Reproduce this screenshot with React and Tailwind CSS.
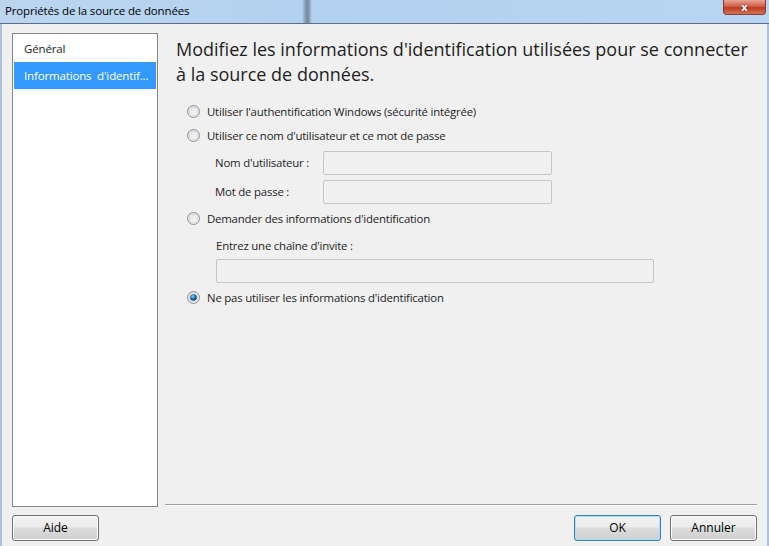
import React from 'react';

const font = { fontFamily: '"Segoe UI", "Open Sans", "Noto Sans", sans-serif' };

function Radio({ checked }) {
  return (
    <svg width="13" height="13" viewBox="0 0 13 13" className="shrink-0">
      <defs>
        <linearGradient id="rg" x1="0" y1="0" x2="1" y2="1">
          <stop offset="0" stopColor="#e2e2e2" />
          <stop offset="1" stopColor="#fbfbfb" />
        </linearGradient>
        <radialGradient id="dot" cx="0.4" cy="0.35" r="0.7">
          <stop offset="0" stopColor="#8fd0f5" />
          <stop offset="0.5" stopColor="#1a6fb0" />
          <stop offset="1" stopColor="#0b3f6e" />
        </radialGradient>
      </defs>
      <circle cx="6.5" cy="6.5" r="6" fill="url(#rg)" stroke="#8e8f8f" strokeWidth="1" />
      <circle cx="6.5" cy="6.5" r="4.3" fill="none" stroke="#d4d4d4" strokeWidth="1" />
      {checked && <circle cx="6.5" cy="6.5" r="3.3" fill="url(#dot)" />}
    </svg>
  );
}

function Option({ checked, children }) {
  return (
    <div className="flex items-center gap-[7px] h-[17px] text-[11.4px] tracking-[-0.2px] text-[#1e1e1e]">
      <Radio checked={checked} />
      <span>{children}</span>
    </div>
  );
}

function Field({ className }) {
  return <div className={`h-[24px] rounded-[2px] border border-[#c5c5c5] bg-[#f0f0f0] ${className}`} />;
}

function Button({ children, primary, className }) {
  return (
    <button
      className={`h-[26px] w-[87px] rounded-[3px] border text-[12px] text-black bg-[linear-gradient(#f3f3f3_0%,#ebebeb_45%,#dddddd_50%,#cfcfcf_100%)] ${
        primary ? 'border-[#3c7fb1] shadow-[inset_0_0_0_1px_#a8e1f8]' : 'border-[#707070] shadow-[inset_0_0_0_1px_#fcfcfc]'
      } ${className || ''}`}
    >
      {children}
    </button>
  );
}

export default function App() {
  return (
    <div className="w-[769px] h-[546px] overflow-hidden flex flex-col bg-[#f0f0f0]" style={font}>
      {/* title bar */}
      <div className="relative h-[24px] shrink-0 bg-[linear-gradient(90deg,#bcd6ef,#b3d1f0_40%,#b8d5f2)] border-b border-[#5c6f84] flex items-center">
        <span className="pl-[5px] text-[11.5px] tracking-[-0.15px] text-black leading-none -mt-[2px]">Propriétés de la source de données</span>
        <div className="absolute left-[302px] top-0 h-[23px] w-[10px] bg-[linear-gradient(90deg,transparent,#7f93a8_40%,#75899e_60%,transparent)]" />
        <div className="absolute right-[3px] top-0 h-[15px] w-[43px] rounded-b-[4px] border border-t-0 border-[#8a3a30] bg-[linear-gradient(#e8a594,#d0604a_45%,#c0391f_55%,#d0765c)] flex items-center justify-center">
          <span className="text-white text-[11px] font-bold leading-none -mt-[1px]" style={{ textShadow: '0 0 2px #5a1a10' }}>x</span>
        </div>
      </div>

      {/* body */}
      <div className="flex-1 flex flex-col border-l-2 border-r-2 border-l-[#a9c3dd] border-r-[#a9c3dd] px-[10px] pt-[9px] pb-[5px]">
        <div className="flex flex-1 min-h-0">
          {/* nav */}
          <div className="w-[146px] h-[474px] shrink-0 bg-white border border-[#828790] pt-[2px] px-[1px] text-[11.5px] tracking-[-0.15px]">
            <div className="h-[26px] flex items-center pl-[10px] text-[#1e1e1e]">Général</div>
            <div className="h-[27px] flex items-center pl-[10px] bg-[#3399ff] text-white whitespace-nowrap">
              Informations&nbsp; d'identif...
            </div>
          </div>

          {/* content */}
          <div className="flex-1 flex flex-col pl-[7px]">
            <div className="flex-1 pl-[11px]">
              <h1 className="text-[18px] leading-[25px] text-[#1e1e1e] pt-[4px]">
                Modifiez les informations d'identification utilisées pour se connecter
                <br />à la source de données.
              </h1>
              <div className="mt-[16px] pl-[11px] flex flex-col">
                <Option>Utiliser l'authentification Windows (sécurité intégrée)</Option>
                <div className="mt-[7px]">
                  <Option>Utiliser ce nom d'utilisateur et ce mot de passe</Option>
                </div>
                <div className="mt-[7px] pl-[28px] flex flex-col gap-[5px] text-[11.4px] tracking-[-0.2px] text-[#1e1e1e]">
                  <div className="flex items-center">
                    <span className="w-[108px]">Nom d'utilisateur :</span>
                    <Field className="w-[229px]" />
                  </div>
                  <div className="flex items-center">
                    <span className="w-[108px]">Mot de passe :</span>
                    <Field className="w-[229px]" />
                  </div>
                </div>
                <div className="mt-[6px]">
                  <Option>Demander des informations d'identification</Option>
                </div>
                <div className="mt-[10px] pl-[29px] text-[11.4px] tracking-[-0.2px] text-[#1e1e1e]">
                  <div className="h-[17px]">Entrez une chaîne d'invite :</div>
                  <Field className="mt-[5px] w-[438px]" />
                </div>
                <div className="mt-[6px]">
                  <Option checked>Ne pas utiliser les informations d'identification</Option>
                </div>
              </div>
            </div>
            <div className="h-px bg-[#a0a0a0] mb-[1px] border-b border-white box-content" />
          </div>
        </div>

        {/* buttons */}
        <div className="flex items-center mt-[8px]">
          <Button>Aide</Button>
          <div className="flex-1" />
          <Button primary>OK</Button>
          <Button className="ml-[9px]">Annuler</Button>
        </div>
      </div>
    </div>
  );
}
